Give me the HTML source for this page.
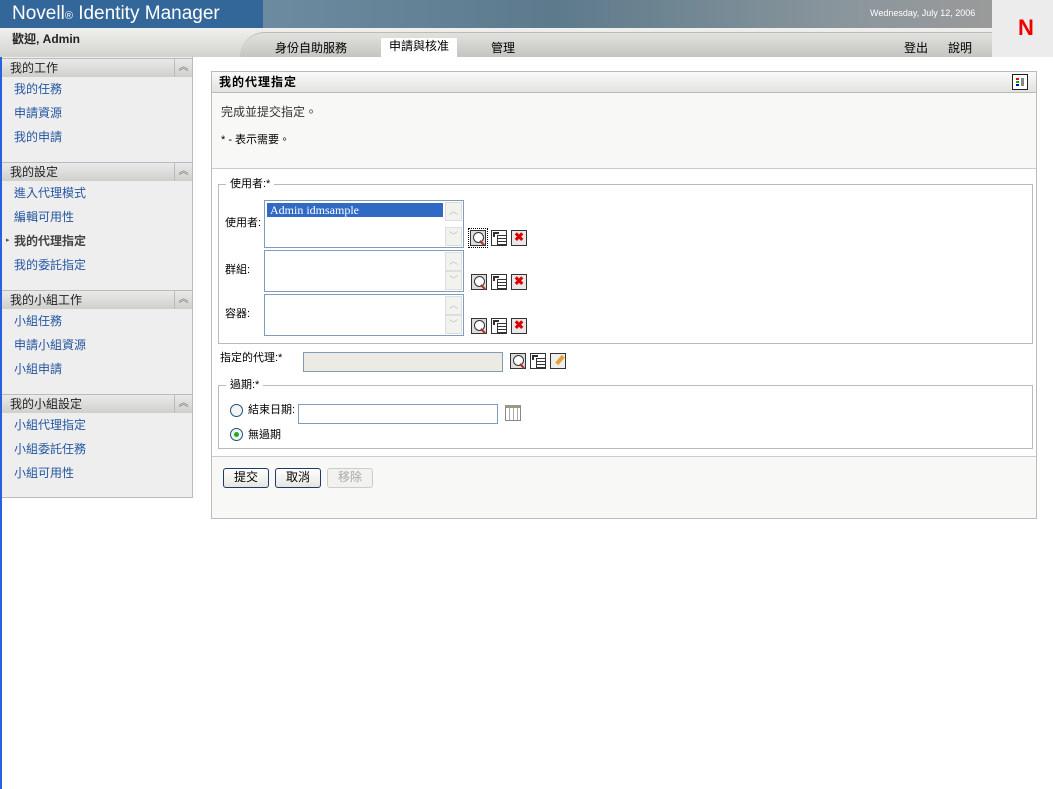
<!DOCTYPE html>
<html><head><meta charset="utf-8"><style>
*{box-sizing:border-box;margin:0;padding:0}
body{width:1053px;height:789px;background:#fff;font-family:"Liberation Sans","Noto Sans CJK TC",sans-serif;font-size:12px;line-height:14px;color:#000;position:relative;overflow:hidden}
.a{position:absolute}
.lnk{color:#2557a0;font-size:12px}
.sh{position:absolute;left:2px;width:190px;height:19px;background:linear-gradient(#eaeaea,#cfcfcc);border-top:1px solid #bbb;font-size:12px;padding:2px 0 0 8px;color:#222}
.sh i{position:absolute;right:0;top:0;width:18px;height:18px;border-left:1px solid #bbb;font-style:normal;color:#777;font-size:10px;text-align:center;line-height:17px}
.lb{position:absolute;left:264px;width:200px;border:1px solid #7f9db9;background:#fff}
.sb{position:absolute;right:1px;width:17px;height:19px;background:#f2f2ee;border:1px solid #ddd;color:#bbb;font-size:9px;text-align:center;line-height:17px}
.ic{position:absolute;width:16px;height:16px;border:1px solid #333;background:#ddd}
.ins{background:#fff}
.ins:before{content:"";position:absolute;left:5px;top:4px;width:8px;height:9px;border:1px solid #333;background:repeating-linear-gradient(#fff 0 2px,#333 2px 3px)}
.ins:after{content:"";position:absolute;left:1px;top:1px;width:4px;height:3px;border-top:2px solid #333;border-left:2px solid #333}
.mag:before{content:"";position:absolute;left:2px;top:1px;width:9px;height:9px;border:1px solid #333;border-radius:50%;background:#fff}
.mag:after{content:"";position:absolute;left:10px;top:9px;width:2px;height:6px;background:#a33;transform:rotate(-45deg)}
.btn{position:absolute;top:468px;height:20px;border:1px solid #1c3a6a;border-radius:3px;background:linear-gradient(#fff,#e6e6e0);font-size:12px;text-align:center;line-height:17px}
</style></head><body>
<div class="a" style="left:0;top:0;width:2px;height:789px;background:#2a5fe0"></div>
<div class="a" style="left:0;top:0;width:263px;height:28px;background:#336699;color:#fff;font-size:19px;line-height:22px;padding:3px 0 0 12px">Novell<span style="font-size:11px">®</span> Identity Manager</div>
<div class="a" style="left:263px;top:0;width:729px;height:28px;background:linear-gradient(90deg,#6d8ba0,#5c7a8c 40%,#8a969c 80%,#9a9a9a)"></div>
<div class="a" style="left:870px;top:6px;color:#fff;font-size:9px">Wednesday, July 12, 2006</div>
<div class="a" style="left:992px;top:0;width:61px;height:57px;background:#ececec"></div>
<div class="a" style="left:1018px;top:16px;color:#e00;font-size:22px;line-height:24px;font-weight:bold">N</div>
<div class="a" style="left:0;top:28px;width:992px;height:29px;background:linear-gradient(#f0f0ee,#d2d2ce)"></div>
<div class="a" style="left:240px;top:32px;width:752px;height:25px;background:linear-gradient(#e2e2de,#c4c4c0);border-radius:30px 0 0 0;border-top:1px solid #bbb"></div>
<div class="a" style="left:12px;top:32px;font-size:12px;font-weight:bold;color:#222">歡迎, Admin</div>
<div class="a" style="left:275px;top:41px">身份自助服務</div>
<div class="a" style="left:381px;top:38px;width:76px;height:19px;background:#fff;text-align:center;padding-top:1px">申請與核准</div>
<div class="a" style="left:491px;top:41px">管理</div>
<div class="a" style="left:904px;top:41px">登出</div>
<div class="a" style="left:948px;top:41px">說明</div>
<div class="a" style="left:2px;top:57px;width:191px;height:441px;background:#eee;border-right:1px solid #bbb;border-bottom:1px solid #bbb"></div>
<div class="sh" style="top:58px">我的工作<i>︽</i></div>
<div class="a lnk" style="left:14px;top:82px">我的任務</div>
<div class="a lnk" style="left:14px;top:106px">申請資源</div>
<div class="a lnk" style="left:14px;top:130px">我的申請</div>
<div class="sh" style="top:162px">我的設定<i>︽</i></div>
<div class="a lnk" style="left:14px;top:186px">進入代理模式</div>
<div class="a lnk" style="left:14px;top:210px">編輯可用性</div>
<div class="a" style="left:6px;top:234px;font-size:7px;color:#555">▸</div>
<div class="a" style="left:14px;top:234px;font-weight:bold;color:#444">我的代理指定</div>
<div class="a lnk" style="left:14px;top:258px">我的委託指定</div>
<div class="sh" style="top:290px">我的小組工作<i>︽</i></div>
<div class="a lnk" style="left:14px;top:314px">小組任務</div>
<div class="a lnk" style="left:14px;top:338px">申請小組資源</div>
<div class="a lnk" style="left:14px;top:362px">小組申請</div>
<div class="sh" style="top:394px">我的小組設定<i>︽</i></div>
<div class="a lnk" style="left:14px;top:418px">小組代理指定</div>
<div class="a lnk" style="left:14px;top:442px">小組委託任務</div>
<div class="a lnk" style="left:14px;top:466px">小組可用性</div>
<div class="a" style="left:211px;top:71px;width:826px;height:448px;border:1px solid #bbb;background:#fff"></div>
<div class="a" style="left:212px;top:72px;width:824px;height:21px;background:linear-gradient(#fafafa,#e2e2de);border-bottom:1px solid #bbb;font-weight:bold;padding:3px 0 0 7px;letter-spacing:1px">我的代理指定</div>
<div class="a" style="left:1012px;top:74px;width:16px;height:16px;border:1px solid #222;background:#fff"><div class="a" style="left:3px;top:3px;width:3px;height:2px;background:#e00"></div><div class="a" style="left:3px;top:6px;width:3px;height:2px;background:#0a0"></div><div class="a" style="left:3px;top:9px;width:3px;height:2px;background:#00c"></div><div class="a" style="left:8px;top:3px;width:3px;height:8px;background:#888"></div></div>
<div class="a" style="left:212px;top:93px;width:824px;height:76px;background:#f8f8f6;border-bottom:1px solid #ccc"></div>
<div class="a" style="left:221px;top:105px;color:#333">完成並提交指定。</div>
<div class="a" style="left:221px;top:133px;font-size:11px">* - 表示需要。</div>
<div class="a" style="left:218px;top:184px;width:815px;height:160px;border:1px solid #bbb"></div>
<div class="a" style="left:226px;top:177px;background:#fff;padding:0 4px;font-size:11px">使用者:*</div>
<div class="a" style="left:225px;top:216px;font-size:11px">使用者:</div>
<div class="lb" style="top:200px;height:48px"><div style="margin:2px;background:#316ac5;color:#fff;font-family:'Liberation Serif',serif;font-size:12px;width:176px;height:14px;padding-left:3px;line-height:14px">Admin idmsample</div><div class="sb" style="top:1px">︿</div><div class="sb" style="bottom:1px">﹀</div></div>
<div class="a" style="left:225px;top:263px;font-size:11px">群組:</div>
<div class="lb" style="top:250px;height:42px"><div class="sb" style="top:1px">︿</div><div class="sb" style="bottom:1px">﹀</div></div>
<div class="a" style="left:225px;top:307px;font-size:11px">容器:</div>
<div class="lb" style="top:294px;height:42px"><div class="sb" style="top:1px">︿</div><div class="sb" style="bottom:1px">﹀</div></div>
<div class="ic mag" style="left:470px;top:230px;outline:1px dotted #000;outline-offset:1px"></div>
<div class="ic ins" style="left:491px;top:230px"></div>
<div class="ic" style="left:511px;top:230px;background:#e8e8e8;color:#d00;font-weight:bold;font-size:12px;line-height:13px;text-align:center">✖</div>
<div class="ic mag" style="left:471px;top:274px"></div>
<div class="ic ins" style="left:491px;top:274px"></div>
<div class="ic" style="left:511px;top:274px;background:#e8e8e8;color:#d00;font-weight:bold;font-size:12px;line-height:13px;text-align:center">✖</div>
<div class="ic mag" style="left:471px;top:318px"></div>
<div class="ic ins" style="left:491px;top:318px"></div>
<div class="ic" style="left:511px;top:318px;background:#e8e8e8;color:#d00;font-weight:bold;font-size:12px;line-height:13px;text-align:center">✖</div>
<div class="a" style="left:220px;top:351px;font-size:11px">指定的代理:*</div>
<div class="a" style="left:303px;top:352px;width:200px;height:20px;background:#ebebe4;border:1px solid #7f9db9"></div>
<div class="ic mag" style="left:510px;top:353px"></div>
<div class="ic ins" style="left:530px;top:353px"></div>
<div class="ic" style="left:550px;top:353px;background:#eee"><div class="a" style="left:7px;top:1px;width:4px;height:10px;background:#e8a030;transform:rotate(40deg)"></div></div>
<div class="a" style="left:218px;top:385px;width:815px;height:64px;border:1px solid #bbb"></div>
<div class="a" style="left:226px;top:378px;background:#fff;padding:0 4px;font-size:11px">過期:*</div>
<div class="a" style="left:230px;top:404px;width:13px;height:13px;border:1px solid #1c5180;border-radius:50%;background:#f4f4f0"></div>
<div class="a" style="left:248px;top:403px;font-size:11px">結束日期:</div>
<div class="a" style="left:298px;top:404px;width:200px;height:20px;border:1px solid #7f9db9;background:#fff"></div>
<div class="a" style="left:505px;top:405px;width:16px;height:16px;border:1px solid #888;background:repeating-linear-gradient(90deg,#fff 0 3px,#aaa 3px 4px),#fff;border-top:3px solid #998"></div>
<div class="a" style="left:230px;top:428px;width:13px;height:13px;border:1px solid #1c5180;border-radius:50%;background:#f4f4f0"><div class="a" style="left:3px;top:3px;width:5px;height:5px;border-radius:50%;background:#2a2"></div></div>
<div class="a" style="left:248px;top:428px;font-size:11px">無過期</div>
<div class="a" style="left:212px;top:456px;width:824px;height:1px;background:#ccc"></div>
<div class="a" style="left:212px;top:457px;width:824px;height:61px;background:#f8f8f6"></div>
<div class="btn" style="left:223px;width:46px">提交</div>
<div class="btn" style="left:275px;width:46px">取消</div>
<div class="btn" style="left:327px;width:46px;border-color:#ccc;color:#aaa;background:#f2f2ee">移除</div>
</body></html>
